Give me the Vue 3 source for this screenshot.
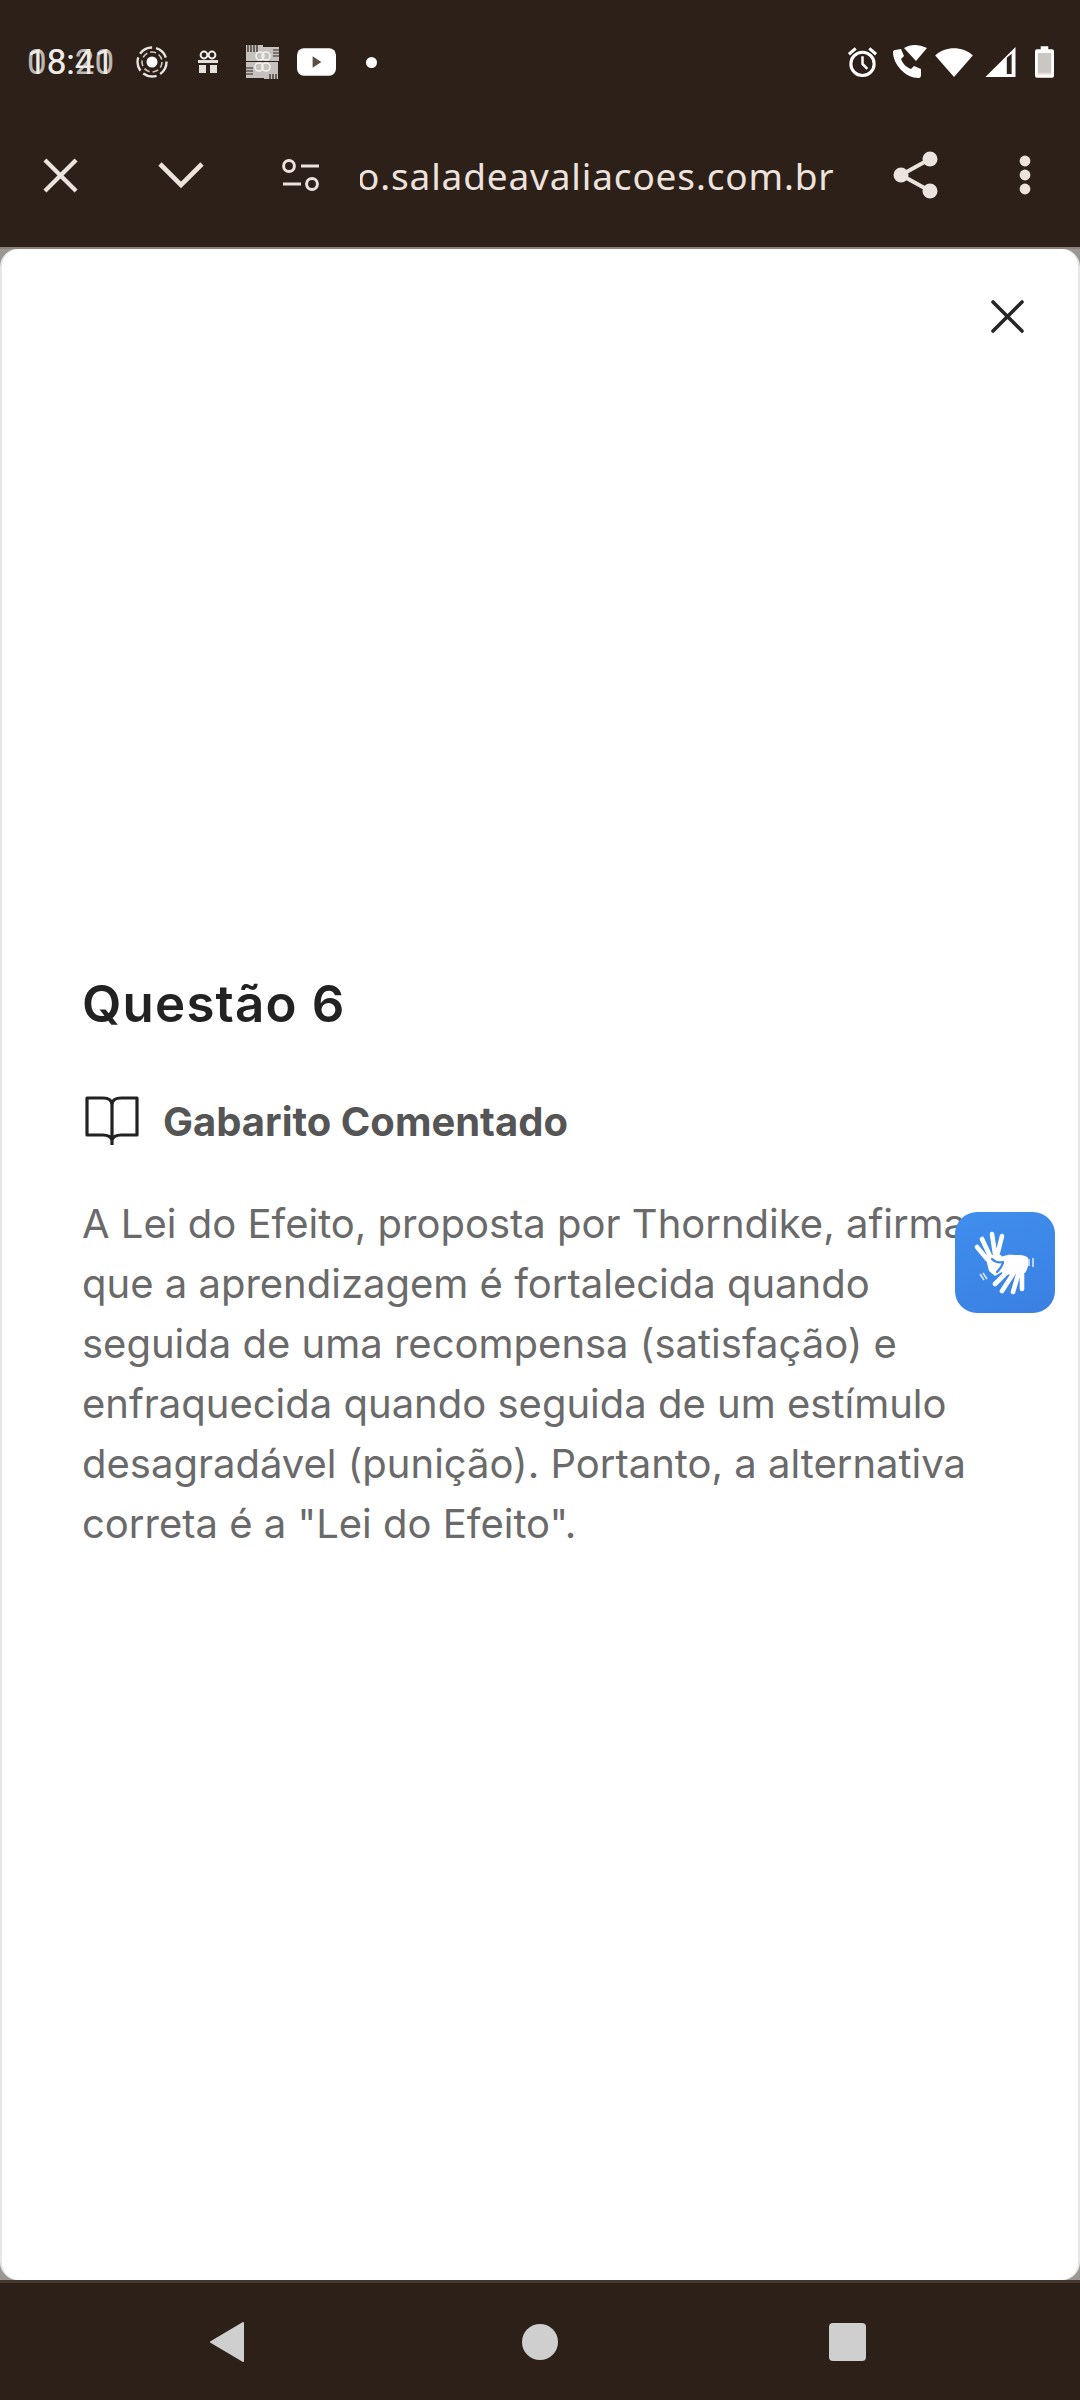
<template>
  <div class="screen">
    <div class="status-bar">
      <div class="status-left">
        <span class="clock">
          <span>18:41</span>
          <span class="clock-ghost">08:20</span>
        </span>
        <svg class="ic-target" viewBox="0 0 34 34" width="34" height="34">
          <circle cx="17" cy="17" r="14.5" fill="none" stroke="#e8e4e0" stroke-width="2.4" stroke-dasharray="14 4" />
          <circle cx="17" cy="17" r="5.5" fill="#fff" />
          <circle cx="17" cy="17" r="10" fill="none" stroke="#cfcac6" stroke-width="1.6" stroke-dasharray="6 3" />
        </svg>
        <svg class="ic-gift" viewBox="0 0 22 24" width="22" height="24">
          <circle cx="7" cy="5" r="3.4" fill="none" stroke="#eee" stroke-width="2" />
          <circle cx="15" cy="5" r="3.4" fill="none" stroke="#eee" stroke-width="2" />
          <path d="M1 10h20v3H1zM2 15h7v8H2zM13 15h7v8h-7z" fill="#e2dfdc" />
        </svg>
        <svg class="ic-pattern" viewBox="0 0 36 36" width="36" height="36">
          <path d="M1 1h17v16H1zM18 3h16v14H18zM1 18h18v16H1zM19 18h14v17H19z" fill="#c4c1be" />
          <path d="M3 1v7M6 1v7M9 1v7M12 1v7M28 6h6M28 9h6M28 12h6M1 24h7M1 27h7M1 30h7M25 30v5M28 30v5M31 30v5" stroke="#2c2019" stroke-width="1.2" />
          <circle cx="15" cy="12" r="4" fill="none" stroke="#f2f0ee" stroke-width="1.6" />
          <circle cx="21" cy="12" r="4" fill="none" stroke="#f2f0ee" stroke-width="1.6" />
          <circle cx="14" cy="23" r="4" fill="none" stroke="#f2f0ee" stroke-width="1.6" />
          <circle cx="21" cy="23" r="4" fill="none" stroke="#f2f0ee" stroke-width="1.6" />
        </svg>
        <svg class="ic-yt" viewBox="0 0 40 28" width="39" height="28">
          <rect width="40" height="28" rx="7" fill="#fff" />
          <path d="M16 8l9 6-9 6z" fill="#5a5048" />
        </svg>
        <span class="dot"></span>
      </div>
      <div class="status-right">
        <svg class="ic-alarm" viewBox="0 0 32 32" width="31" height="32">
          <circle cx="16" cy="18" r="12" fill="none" stroke="#fff" stroke-width="3.2" />
          <path d="M16 10v8l5 5" fill="none" stroke="#fff" stroke-width="2.6" />
          <path d="M2 8l7-6M30 8l-7-6" stroke="#fff" stroke-width="3.2" />
        </svg>
        <svg class="ic-call" viewBox="0 0 36 36" width="36" height="36">
          <path d="M4 6l6-1 3 7-3 3c2 5 5 8 10 10l3-3 7 3 0 6c0 2-1 3-2 3C14 34 2 20 2 8c0-1 1-2 2-2z" fill="#fff" />
          <path d="M13 4c7-4 14-4 23 0l-11 13z" fill="#fff" />
        </svg>
        <svg class="ic-wifi" viewBox="0 0 40 34" width="38" height="32">
          <path d="M0 10C11 0 29 0 40 10L20 33z" fill="#fff" />
        </svg>
        <svg class="ic-signal" viewBox="0 0 32 33" width="32" height="32">
          <path d="M1 32L32 1v31z" fill="#fff" />
          <path d="M23 12v17h5V8z" fill="#2c2019" />
        </svg>
        <svg class="ic-battery" viewBox="0 0 20 33" width="19" height="32">
          <path d="M6 0h8v3h4a2 2 0 0 1 2 2v26a2 2 0 0 1-2 2H2a2 2 0 0 1-2-2V5a2 2 0 0 1 2-2h4z" fill="#fff" />
          <rect x="3" y="7" width="14" height="21" fill="#c9c6c3" />
          <rect x="3" y="28" width="14" height="2" fill="#f6dcd2" />
        </svg>
      </div>
    </div>

    <div class="toolbar">
      <svg viewBox="0 0 36 36" width="35" height="35">
        <path d="M2 2l32 32M34 2L2 34" stroke="#ece3de" stroke-width="4.4" fill="none" />
      </svg>
      <svg class="tb-chevron" viewBox="0 0 46 28" width="46" height="28">
        <path d="M2 3l21 21L44 3" stroke="#ece3de" stroke-width="4.6" fill="none" />
      </svg>
      <svg class="tb-tune" viewBox="0 0 38 32" width="38" height="32">
        <circle cx="7" cy="7" r="5.4" fill="none" stroke="#ece3de" stroke-width="3" />
        <path d="M19 7h18M1 25h18" stroke="#ece3de" stroke-width="3" />
        <circle cx="30" cy="25" r="5.4" fill="none" stroke="#ece3de" stroke-width="3" />
      </svg>
      <div class="url">o.saladeavaliacoes.com.br</div>
      <svg class="tb-share" viewBox="0 0 48 50" width="48" height="50">
        <path d="M38 9L9 25l29 16" stroke="#ece3de" stroke-width="4" fill="none" />
        <circle cx="38" cy="9" r="7.5" fill="#ece3de" />
        <circle cx="9" cy="25" r="7.5" fill="#ece3de" />
        <circle cx="38" cy="41" r="7.5" fill="#ece3de" />
      </svg>
      <svg class="tb-more" viewBox="0 0 12 40" width="12" height="40">
        <circle cx="6" cy="6" r="5.4" fill="#ece3de" />
        <circle cx="6" cy="20" r="5.4" fill="#ece3de" />
        <circle cx="6" cy="34" r="5.4" fill="#ece3de" />
      </svg>
    </div>

    <div class="sheet-wrap">
      <div class="sheet">
        <div class="sheet-top">
          <svg viewBox="0 0 33 33" width="33" height="33">
            <path d="M2 2l29 29M31 2L2 31" stroke="#262626" stroke-width="3.6" stroke-linecap="round" fill="none" />
          </svg>
        </div>
        <div class="sheet-body">
          <h2 class="title">Questão 6</h2>
          <div class="sub">
            <svg viewBox="0 0 54 52" width="54" height="52">
              <path d="M2 3h16c5 0 9 2 9 7 0-5 4-7 9-7h16v37H36c-5 0-8 2-9 5-1-3-4-5-9-5H2zM27 10v40" fill="none" stroke="#222" stroke-width="3.2" stroke-linejoin="round" />
            </svg>
            <span>Gabarito Comentado</span>
          </div>
          <p class="text">{{ answer }}</p>
        </div>
      </div>
    </div>

    <div class="nav-bar">
      <svg viewBox="0 0 36 42" width="36" height="42"><path d="M34 2L2 21l32 19z" fill="#cfcfcf" stroke="#cfcfcf" stroke-width="2" stroke-linejoin="round" /></svg>
      <span class="nav-home"></span>
      <span class="nav-square"></span>
    </div>

    <button class="vlibras" aria-label="Libras">
      <svg viewBox="0 0 100 100" width="100" height="100">
        <path d="M22 34l10 12M27 26l8 17M37 21l3 20M47 23l-5 20" fill="none" stroke="#fff" stroke-width="4.6" stroke-linecap="round" />
        <path d="M30 42l16 0 6 14-12 7-6-5z" fill="#fff" />
        <path d="M38 47c8-3 14-6 21-5 6 0 12 0 14 3 1 5 0 11-3 15l-21 2-5-7z" fill="#fff" />
        <path d="M37 46c3 3 7 4 11 3M48 50c-1 3-3 6-6 9" fill="none" stroke="#3b86e8" stroke-width="2.2" stroke-linecap="round" />
        <path d="M40 71l13-13M47 78l11-17M58 79l5-17M67 76l0-15" fill="none" stroke="#fff" stroke-width="4.6" stroke-linecap="round" />
        <path d="M74 46v7M78 45v9M25 61l4 6M28 60l4 6" fill="none" stroke="#d6e6fb" stroke-width="1.6" />
      </svg>
    </button>
  </div>
</template>

<script setup>
const answer = 'A Lei do Efeito, proposta por Thorndike, afirma que a aprendizagem é fortalecida quando seguida de uma recompensa (satisfação) e enfraquecida quando seguida de um estímulo desagradável (punição). Portanto, a alternativa correta é a "Lei do Efeito".'
</script>

<style>
body {
  background: #2c2019;
}
</style>

<style scoped>
.screen {
  position: relative;
  width: 1080px;
  height: 2400px;
  display: flex;
  flex-direction: column;
  background: #2c2019;
  font-family: Inter, "Noto Sans", sans-serif;
  overflow: hidden;
}

.status-bar {
  height: 124px;
  flex: none;
  display: flex;
  justify-content: space-between;
  align-items: center;
  padding: 0 26px 0 27px;
  box-sizing: border-box;
}

.status-left, .status-right {
  display: flex;
  align-items: center;
}

.clock {
  position: relative;
  width: 88px;
  font-family: Roboto, sans-serif;
  font-size: 35px;
  color: #eeeae6;
  white-space: nowrap;
}

.clock-ghost {
  position: absolute;
  left: 0;
  top: 0;
  opacity: 0.75;
}

.ic-target { margin-left: 20px; }
.ic-gift { margin-left: 28px; }
.ic-pattern { margin-left: 26px; }
.ic-yt { margin-left: 16px; }

.dot {
  width: 11px;
  height: 11px;
  margin-left: 30px;
  border-radius: 50%;
  background: #fff;
}

.ic-call { margin-left: 13px; }
.ic-wifi { margin-left: 8px; }
.ic-signal { margin-left: 11px; }
.ic-battery { margin-left: 19px; }

.toolbar {
  height: 123px;
  flex: none;
  display: flex;
  align-items: center;
  padding-left: 43px;
  padding-bottom: 21px;
  box-sizing: border-box;
}

.tb-chevron { margin-left: 80px; }
.tb-tune { margin-left: 78px; }

.url {
  width: 478px;
  margin-left: 40px;
  overflow: hidden;
  font-family: "Noto Sans", sans-serif;
  font-size: 37px;
  letter-spacing: 0.85px;
  text-indent: -3px;
  color: #ece3de;
  white-space: nowrap;
}

.tb-share { margin-left: 54px; }
.tb-more { margin-left: 79px; }

.sheet-wrap {
  flex: 1;
  display: flex;
  background: #9a9794;
  border-top: 2px solid #8d827b;
}

.sheet {
  flex: 1;
  display: flex;
  flex-direction: column;
  background: #fff;
  border-radius: 18px;
  border-left: 2px solid #e6e6e6;
  border-right: 2px solid #e6e6e6;
}

.sheet-top {
  display: flex;
  justify-content: flex-end;
  padding: 51px 54px 0 0;
}

.sheet-body {
  padding: 0 74px 0 80px;
  margin-top: 641px;
}

.title {
  margin: 0;
  font-size: 51px;
  line-height: 60px;
  font-weight: 600;
  letter-spacing: 1.2px;
  color: #222;
}

.sub {
  display: flex;
  align-items: center;
  gap: 24px;
  margin-top: 61px;
  padding-left: 3px;
  font-size: 40px;
  font-weight: 700;
  color: #555;
}

.text {
  margin: 47px 0 0;
  font-size: 40px;
  line-height: 60px;
  color: #6a6a6a;
}

.nav-bar {
  height: 120px;
  flex: none;
  display: flex;
  align-items: center;
  padding-left: 209px;
  box-sizing: border-box;
  border-top: 3px solid #46382f;
}

.nav-home {
  width: 36px;
  height: 36px;
  margin-left: 277px;
  border-radius: 50%;
  background: #cfcfcf;
}

.nav-square {
  width: 37px;
  height: 38px;
  margin-left: 271px;
  border-radius: 4px;
  background: #cfcfcf;
}

.vlibras {
  position: absolute;
  left: 955px;
  top: 1212px;
  width: 100px;
  height: 101px;
  padding: 0;
  display: flex;
  align-items: center;
  justify-content: center;
  border: 0;
  border-radius: 22px;
  background: linear-gradient(160deg, #3f8eee, #3a80e2);
}
</style>
